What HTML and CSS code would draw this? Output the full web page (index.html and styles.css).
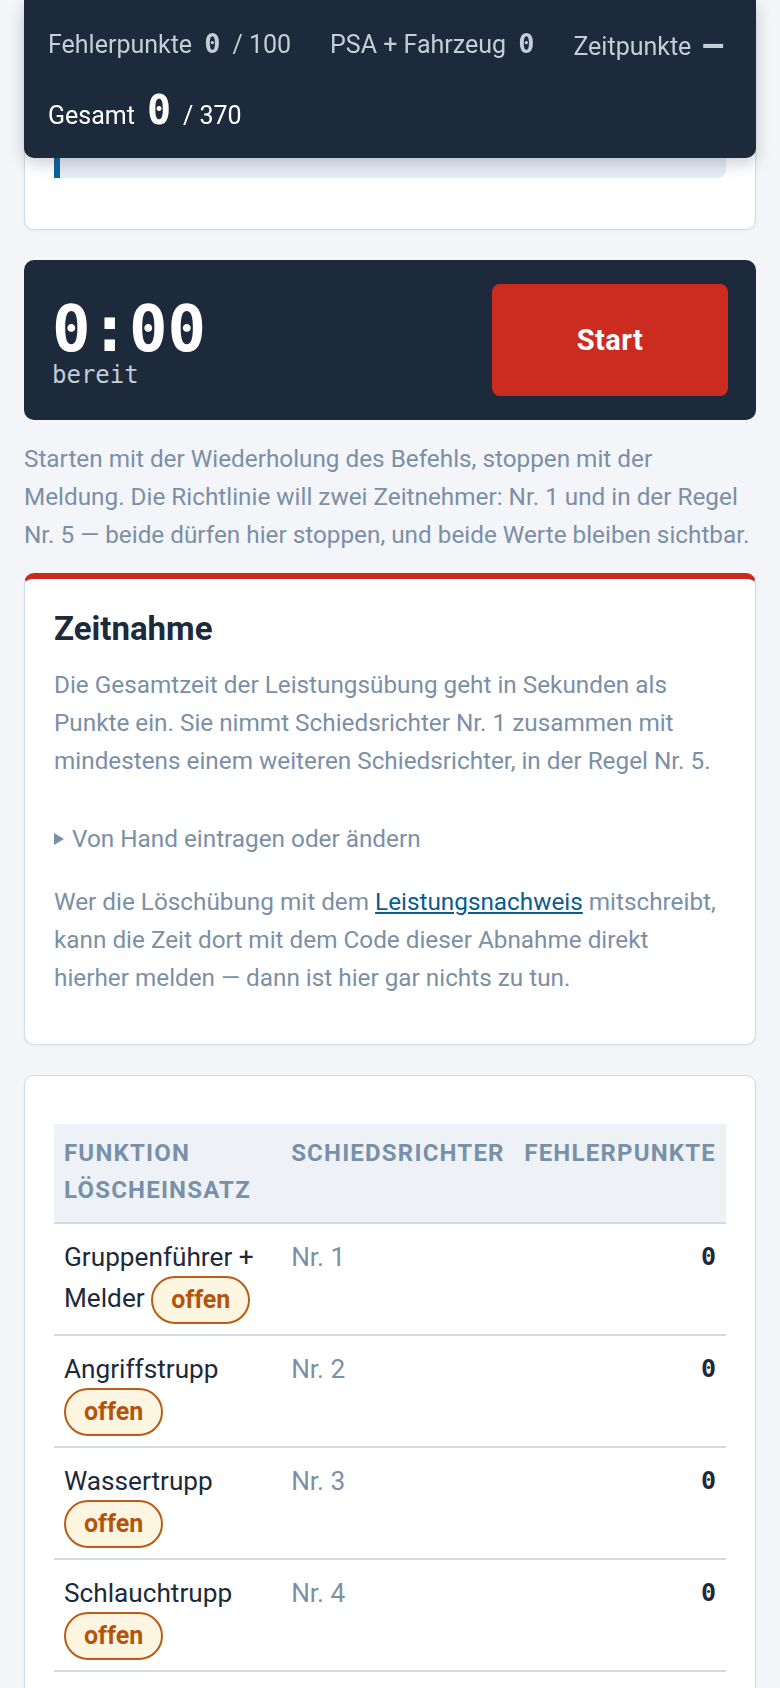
FILE: index.html
```html
<!DOCTYPE html>
<html lang="de">
<head>
<meta charset="utf-8">
<meta name="viewport" content="width=device-width, initial-scale=1">
<title>Abnahme – Zeitnahme</title>
<link rel="stylesheet" href="styles.css">
</head>
<body>
<header class="score">
  <div class="stat"><span>Fehlerpunkte</span><b class="v">0</b><span>/ 100</span></div>
  <div class="stat"><span>PSA + Fahrzeug</span><b class="v">0</b></div>
  <div class="stat"><span>Zeitpunkte</span><b class="v dash">—</b></div>
  <div class="stat total"><span>Gesamt</span><b class="v">0</b><span>/ 370</span></div>
</header>
<main class="page">
  <section class="card first">
    <div class="note"></div>
  </section>

  <section class="timer">
    <div class="clock">
      <div class="time">0:00</div>
      <div class="state">bereit</div>
    </div>
    <button class="start" type="button">Start</button>
  </section>

  <p class="hint">Starten mit der Wiederholung des Befehls, stoppen mit der Meldung. Die Richtlinie will zwei Zeitnehmer: Nr. 1 und in der Regel Nr. 5 — beide dürfen hier stoppen, und beide Werte bleiben sichtbar.</p>

  <section class="card red">
    <h2>Zeitnahme</h2>
    <p class="muted lead">Die Gesamtzeit der Leistungsübung geht in Sekunden als Punkte ein. Sie nimmt Schiedsrichter Nr. 1 zusammen mit mindestens einem weiteren Schiedsrichter, in der Regel Nr. 5.</p>
    <details class="manual">
      <summary>Von Hand eintragen oder ändern</summary>
    </details>
    <p class="muted last">Wer die Löschübung mit dem <a href="#">Leistungsnachweis</a> mitschreibt, kann die Zeit dort mit dem Code dieser Abnahme direkt hierher melden — dann ist hier gar nichts zu tun.</p>
  </section>

  <section class="card tablecard">
    <table class="functions">
      <colgroup>
        <col class="c1"><col class="c2"><col class="c3">
      </colgroup>
      <thead>
        <tr><th>Funktion Löscheinsatz</th><th>Schiedsrichter</th><th class="num">Fehlerpunkte</th></tr>
      </thead>
      <tbody>
        <tr><td>Gruppenführer + Melder <span class="badge">offen</span></td><td class="ref">Nr. 1</td><td class="pts">0</td></tr>
        <tr><td>Angriffstrupp <span class="badge">offen</span></td><td class="ref">Nr. 2</td><td class="pts">0</td></tr>
        <tr><td>Wassertrupp <span class="badge">offen</span></td><td class="ref">Nr. 3</td><td class="pts">0</td></tr>
        <tr><td>Schlauchtrupp <span class="badge">offen</span></td><td class="ref">Nr. 4</td><td class="pts">0</td></tr>
      </tbody>
    </table>
  </section>
</main>
</body>
</html>
```
FILE: styles.css
```css
* { box-sizing: border-box; }
html, body { margin: 0; }
body {
  background: #f3f5f8;
  font-family: Roboto, "Liberation Sans", Arial, sans-serif;
  font-size: 24.3px;
  line-height: 38px;
  color: #1c2a3b;
}

/* sticky score bar */
.score {
  position: fixed;
  top: 0;
  left: 24px;
  right: 24px;
  z-index: 10;
  background: #1c2a3b;
  border-radius: 0 0 10px 10px;
  box-shadow: 0 6px 16px rgba(28, 42, 59, 0.22);
  padding: 26px 8px 24px 24px;
  display: flex;
  flex-wrap: wrap;
  align-content: flex-start;
  column-gap: 39px;
  row-gap: 27px;
  font-size: 25px;
}
.stat {
  display: flex;
  align-items: baseline;
  gap: 12px;
  color: #c6cdd7;
  line-height: 36px;
}
.stat .v {
  font-family: "DejaVu Sans Mono", "Liberation Mono", monospace;
  font-weight: 700;
  font-size: 27px;
}
.stat .v.dash { font-size: 33px; }
.stat.total { color: #ffffff; }
.stat.total .v { font-size: 40px; }

.page { padding: 0 24px 40px; }

.card {
  background: #ffffff;
  border: 1px solid #d3dae3;
  border-radius: 10px;
  box-shadow: 0 1px 3px rgba(28, 42, 59, 0.06);
  padding: 30px 29px;
}
.card.first { padding-bottom: 51px; }
.note {
  height: 147px;
  background: #e6edf6;
  border-left: 6px solid #0a62a0;
  border-radius: 0 8px 8px 0;
}

/* timer */
.timer {
  margin-top: 30px;
  background: #1c2a3b;
  border-radius: 10px;
  padding: 24px 28px;
  display: flex;
  align-items: center;
  justify-content: space-between;
}
.clock { padding-top: 4px; }
.time {
  font-family: "DejaVu Sans Mono", "Liberation Mono", monospace;
  font-weight: 700;
  font-size: 64px;
  line-height: 66px;
  color: #ffffff;
}
.state {
  font-family: "DejaVu Sans Mono", "Liberation Mono", monospace;
  font-size: 24px;
  line-height: 26px;
  color: #c3ccd7;
}
.start {
  width: 236px;
  height: 112px;
  background: #cc2b1f;
  color: #ffffff;
  border: 0;
  border-radius: 8px;
  font-family: Roboto, "Liberation Sans", Arial, sans-serif;
  font-weight: 700;
  font-size: 29px;
  letter-spacing: 0.4px;
}

.hint {
  margin: 20px 0 19px;
  color: #7b8fa7;
}

/* Zeitnahme card */
.card.red { border-top: 6px solid #c9291e; }
.card h2 {
  margin: 0 0 17px;
  font-size: 33px;
  line-height: 40px;
  font-weight: 700;
  color: #1c2a3b;
}
.muted { color: #7b8fa7; }
.lead { margin: 0 0 40px; }
.last { margin: 25px 0 17px; }
.manual summary {
  list-style: none;
  color: #7b8fa7;
  display: flex;
  align-items: center;
  cursor: pointer;
}
.manual summary::-webkit-details-marker { display: none; }
.manual summary::before {
  content: "";
  width: 0;
  height: 0;
  border-top: 6px solid transparent;
  border-bottom: 6px solid transparent;
  border-left: 10px solid #7b8fa7;
  margin-right: 8px;
}
.card a { color: #0b5c8f; text-decoration: underline; }

/* table card */
.tablecard {
  margin-top: 30px;
  padding-top: 48px;
}
.functions {
  width: 100%;
  border-collapse: collapse;
  table-layout: fixed;
}
.functions .c1 { width: 33.8%; }
.functions .c2 { width: 34.7%; }
.functions th {
  background: #eef2f7;
  padding: 11px 10px 13px;
  font-size: 24px;
  line-height: 37px;
  font-weight: 700;
  letter-spacing: 0.05em;
  text-transform: uppercase;
  color: #7890a8;
  text-align: left;
  vertical-align: top;
  border-bottom: 2px solid #d3dae3;
}
.functions th.num { text-align: right; }
.functions td {
  padding: 14px 10px 10px;
  vertical-align: top;
  border-bottom: 2px solid #d3dae3;
  font-size: 26.2px;
}
.functions td.ref { color: #7a90a8; }
.functions td.pts {
  text-align: right;
  font-family: "DejaVu Sans Mono", "Liberation Mono", monospace;
  font-weight: 700;
  font-size: 25px;
}
.badge {
  display: inline-block;
  vertical-align: middle;
  height: 48px;
  line-height: 44px;
  padding: 0 18px;
  border: 2px solid #b95c16;
  border-radius: 24px;
  background: #fff6e2;
  color: #b4540c;
  font-weight: 700;
  font-size: 25px;
}
```
